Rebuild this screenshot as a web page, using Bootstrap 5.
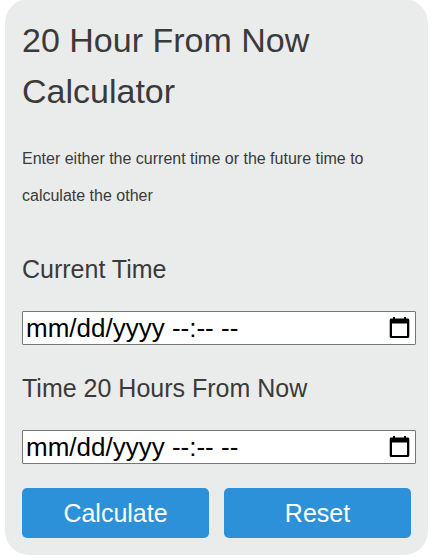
<!DOCTYPE html>
<html lang="en">
<head>
<meta charset="utf-8">
<meta name="viewport" content="width=device-width, initial-scale=1">
<title>20 Hour From Now Calculator</title>
<link href="https://cdn.jsdelivr.net/npm/bootstrap@5.3.0/dist/css/bootstrap.min.css" rel="stylesheet">
<style>
  body { font-family: "Liberation Sans", Arial, sans-serif; color: #3a3a3a; background: #fff; }
  .calculator { margin: -1px 8px 0 5px; padding: 16px 12px 17px 17px; border-radius: 24px; background: #eaeceb; }
  .calculator h1 { font-size: 34px; line-height: 51px; margin-bottom: 23px; }
  .intro { font-size: 16px; line-height: 37px; margin-bottom: 36px; }
  .field-label { font-size: 25px; line-height: 38px; margin-bottom: 23px; }
  .time-box { height: 34px; padding: 0 3px; border: 1px solid #767676; border-radius: 1px; background: #fff; }
  .time-field { min-width: 0; padding: 0; border: 0; outline: 0; background: transparent; color: #000; font-size: 26px; line-height: 32px; }
  .time-field::placeholder { color: #000; opacity: 1; }
  .time-box:focus-within { outline: 2px solid #2d91d9; }
  .picker-btn { padding: 0; border: 0; background: transparent; color: #000; }
  .picker-btn svg { width: 24px; height: 24px; }
  .actions { gap: 15px; padding-right: 5px; }
  .action-btn { height: 50px; padding: 0; border: 0; border-radius: 5px; background: #2d91d9; color: #fff; font-size: 25px; line-height: 50px; }
  .action-btn:hover { background: #237fc2; color: #fff; }
</style>
</head>
<body>
<main class="calculator">
  <h1 class="fw-normal">20 Hour From Now Calculator</h1>
  <p class="intro">Enter either the current time or the future time to calculate the other</p>
  <form>
    <div class="mb-4">
      <label class="field-label d-block" for="current-time">Current Time</label>
      <div class="time-box d-flex align-items-center">
        <input class="time-field flex-grow-1" type="text" id="current-time" placeholder="mm/dd/yyyy --:-- --">
        <button class="picker-btn d-flex" type="button" aria-label="Pick current time">
          <svg viewBox="0 0 24 24" fill="currentColor" aria-hidden="true"><path fill-rule="evenodd" d="M5 1h2v1.500h9V1h2v1.500h1.500c1.200 0 1.800.6 1.800 1.800v15.900c0 1.200-.6 1.800-1.800 1.800h-16c-1.200 0-1.800-.6-1.800-1.800V4.300c0-1.200.6-1.800 1.800-1.800H5zM4 7.500V20h15V7.500z"/></svg>
        </button>
      </div>
    </div>
    <div class="mb-4">
      <label class="field-label d-block" for="future-time">Time 20 Hours From Now</label>
      <div class="time-box d-flex align-items-center">
        <input class="time-field flex-grow-1" type="text" id="future-time" placeholder="mm/dd/yyyy --:-- --">
        <button class="picker-btn d-flex" type="button" aria-label="Pick future time">
          <svg viewBox="0 0 24 24" fill="currentColor" aria-hidden="true"><path fill-rule="evenodd" d="M5 1h2v1.500h9V1h2v1.500h1.500c1.200 0 1.800.6 1.800 1.800v15.900c0 1.200-.6 1.800-1.800 1.800h-16c-1.200 0-1.800-.6-1.800-1.800V4.300c0-1.200.6-1.800 1.800-1.800H5zM4 7.500V20h15V7.500z"/></svg>
        </button>
      </div>
    </div>
    <div class="actions d-flex">
      <button class="btn action-btn flex-fill w-50" type="button">Calculate</button>
      <button class="btn action-btn flex-fill w-50" type="reset">Reset</button>
    </div>
  </form>
</main>
<script src="https://cdn.jsdelivr.net/npm/bootstrap@5.3.0/dist/js/bootstrap.bundle.min.js"></script>
</body>
</html>
